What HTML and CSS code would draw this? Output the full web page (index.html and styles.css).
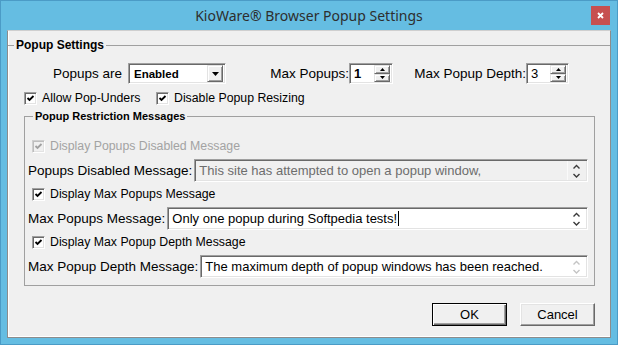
FILE: index.html
```html
<!DOCTYPE html>
<html>
<head>
<meta charset="utf-8">
<link rel="stylesheet" href="styles.css">
</head>
<body>
<div class="window">
  <div class="titlebar">
    <span class="title">KioWare® Browser Popup Settings</span>
    <div class="close"><svg width="7" height="7" viewBox="0 0 7 7"><path d="M1 1L6 6M6 1L1 6" stroke="#fff" stroke-width="1.8"/></svg></div>
  </div>
  <div class="client">
    <fieldset class="group outer">
      <legend>Popup Settings</legend>
      <div class="row1">
        <span class="lbl lbl-popups">Popups are</span>
        <div class="combo">
          <span class="combo-text">Enabled</span>
          <span class="combo-btn"><svg width="7" height="4" viewBox="0 0 7 4"><path d="M0 0H7L3.5 4Z" fill="#000"/></svg></span>
        </div>
        <span class="lbl lbl-maxpop">Max Popups:</span>
        <div class="spin spin-pop">
          <span class="spin-text bold">1</span>
          <span class="spin-btns">
            <span class="spin-btn"><svg width="5" height="3" viewBox="0 0 5 3"><path d="M2.5 0L5 3H0Z" fill="#000"/></svg></span>
            <span class="spin-btn"><svg width="5" height="3" viewBox="0 0 5 3"><path d="M0 0H5L2.5 3Z" fill="#000"/></svg></span>
          </span>
        </div>
        <span class="lbl lbl-depth">Max Popup Depth:</span>
        <div class="spin spin-depth">
          <span class="spin-text">3</span>
          <span class="spin-btns">
            <span class="spin-btn"><svg width="5" height="3" viewBox="0 0 5 3"><path d="M2.5 0L5 3H0Z" fill="#000"/></svg></span>
            <span class="spin-btn"><svg width="5" height="3" viewBox="0 0 5 3"><path d="M0 0H5L2.5 3Z" fill="#000"/></svg></span>
          </span>
        </div>
      </div>
      <div class="row2">
        <label class="check check-under"><span class="box"><svg width="9" height="9" viewBox="0 0 9 9"><path d="M1.5 4L3.5 6L7.5 2" fill="none" stroke="#000" stroke-width="1.8"/></svg></span><span class="ctext">Allow Pop-Unders</span></label>
        <label class="check"><span class="box"><svg width="9" height="9" viewBox="0 0 9 9"><path d="M1.5 4L3.5 6L7.5 2" fill="none" stroke="#000" stroke-width="1.8"/></svg></span><span class="ctext">Disable Popup Resizing</span></label>
      </div>
      <fieldset class="group inner">
        <legend>Popup Restriction Messages</legend>
        <label class="check crow first disabled"><span class="box"><svg width="9" height="9" viewBox="0 0 9 9"><path d="M1.5 4L3.5 6L7.5 2" fill="none" stroke="#a0a0a0" stroke-width="1.8"/></svg></span><span class="ctext">Display Popups Disabled Message</span></label>
        <div class="trow">
          <span class="tlabel">Popups Disabled Message:</span>
          <div class="tbox tbox-disabled">
            <span class="tval">This site has attempted to open a popup window,</span>
            <span class="tscroll"><svg width="9" height="19" viewBox="0 0 9 19"><path d="M1.5 7.5L4.5 4.5L7.5 7.5M1.5 13L4.5 16L7.5 13" fill="none" stroke="#3a3a3a" stroke-width="1.4"/></svg></span>
          </div>
        </div>
        <label class="check crow"><span class="box"><svg width="9" height="9" viewBox="0 0 9 9"><path d="M1.5 4L3.5 6L7.5 2" fill="none" stroke="#000" stroke-width="1.8"/></svg></span><span class="ctext">Display Max Popups Message</span></label>
        <div class="trow">
          <span class="tlabel">Max Popups Message:</span>
          <div class="tbox">
            <span class="tval">Only one popup during Softpedia tests!<span class="caret"></span></span>
            <span class="tscroll"><svg width="9" height="19" viewBox="0 0 9 19"><path d="M1.5 7.5L4.5 4.5L7.5 7.5M1.5 13L4.5 16L7.5 13" fill="none" stroke="#3a3a3a" stroke-width="1.4"/></svg></span>
          </div>
        </div>
        <label class="check crow"><span class="box"><svg width="9" height="9" viewBox="0 0 9 9"><path d="M1.5 4L3.5 6L7.5 2" fill="none" stroke="#000" stroke-width="1.8"/></svg></span><span class="ctext">Display Max Popup Depth Message</span></label>
        <div class="trow">
          <span class="tlabel">Max Popup Depth Message:</span>
          <div class="tbox">
            <span class="tval">The maximum depth of popup windows has been reached.</span>
            <span class="tscroll"><svg width="9" height="19" viewBox="0 0 9 19"><path d="M1.5 7.5L4.5 4.5L7.5 7.5M1.5 13L4.5 16L7.5 13" fill="none" stroke="#c4c4c4" stroke-width="1.4"/></svg></span>
          </div>
        </div>
      </fieldset>
    </fieldset>
    <div class="buttons">
      <button class="btn btn-default">OK</button>
      <button class="btn">Cancel</button>
    </div>
  </div>
</div>
</body>
</html>
```

FILE: styles.css
```css
html, body {
  margin: 0;
  padding: 0;
}
body {
  width: 618px;
  height: 345px;
  overflow: hidden;
  font-family: "Liberation Sans", Arial, sans-serif;
  color: #000;
}
.window {
  box-sizing: border-box;
  width: 618px;
  height: 345px;
  background: #65bde2;
  border: 1px solid #4b9bc6;
  display: flex;
  flex-direction: column;
}
.titlebar {
  height: 29px;
  flex: none;
  display: grid;
  grid-template-columns: 1fr auto 1fr;
  align-items: start;
}
.title {
  grid-column: 2;
  font-family: "Noto Sans", "Open Sans", sans-serif;
  font-size: 14px;
  line-height: 29px;
  color: #2e2e2e;
  white-space: nowrap;
}
.close {
  grid-column: 3;
  justify-self: end;
  margin: 5px 7px 0 0;
  width: 19px;
  height: 19px;
  background: #c75050;
  display: flex;
  align-items: center;
  justify-content: center;
}
.close svg { display: block; }
.client {
  box-sizing: border-box;
  margin: 0 6px 6px;
  flex: 1;
  background: #f0f0f0;
  border: 1px solid #8c8c8c;
  border-top-color: #cfcfcf;
  box-shadow: inset 1px 0 0 #fff, inset 0 -1px 0 #fff;
}
.group {
  margin: 0;
  padding: 0;
  min-width: 0;
  border: 1px solid #a0a0a0;
}
.outer {
  border-width: 1px 0 0 0;
  margin-top: 7px;
}
.outer > legend {
  margin-left: 6px;
  padding: 0 2px;
  font-weight: bold;
  font-size: 12px;
  line-height: 15px;
}
.row1 {
  display: flex;
  align-items: center;
  height: 21px;
  margin-top: 10px;
  padding-left: 45px;
}
.lbl {
  font-size: 13.5px;
  white-space: nowrap;
}
.lbl-popups { width: 75px; }
.lbl-maxpop { margin-left: 42px; width: 81px; text-align: right; }
.lbl-depth { margin-left: 19px; width: 114px; text-align: right; }
.combo, .spin, .tbox {
  box-sizing: border-box;
  border-top: 1px solid #a0a0a0;
  border-left: 1px solid #a0a0a0;
  border-bottom: 1px solid #fff;
  border-right: 1px solid #fff;
  box-shadow: inset 1px 1px 0 #696969, inset -1px -1px 0 #e3e3e3;
  background: #fff;
  display: flex;
  align-items: center;
}
.combo {
  width: 98px;
  height: 21px;
  padding: 2px;
}
.combo-text {
  flex: 1;
  font-weight: bold;
  font-size: 11.5px;
  padding-left: 3px;
}
.combo-btn, .spin-btn {
  box-sizing: border-box;
  display: flex;
  align-items: center;
  justify-content: center;
  background: #f0f0f0;
  border-top: 1px solid #e3e3e3;
  border-left: 1px solid #e3e3e3;
  border-right: 1px solid #696969;
  border-bottom: 1px solid #696969;
  box-shadow: inset 1px 1px 0 #fff, inset -1px -1px 0 #a0a0a0;
}
.combo-btn {
  width: 16px;
  height: 17px;
}
.combo-btn svg, .spin-btn svg, .tscroll svg, .box svg { display: block; }
.spin {
  height: 21px;
  padding: 2px;
}
.spin-pop { width: 44px; }
.spin-depth { width: 43px; }
.spin-text {
  flex: 1;
  font-size: 13px;
  padding-left: 2px;
}
.bold { font-weight: bold; }
.spin-btns {
  display: flex;
  flex-direction: column;
  width: 16px;
  height: 17px;
}
.spin-btn {
  flex: 1;
}
.row2 {
  display: flex;
  align-items: center;
  height: 16px;
  margin-top: 6px;
  padding-left: 16px;
}
.check {
  display: flex;
  align-items: center;
  gap: 5px;
  height: 16px;
}
.check-under { width: 132px; }
.box {
  box-sizing: border-box;
  width: 13px;
  height: 13px;
  flex: none;
  background: #fff;
  border-top: 1px solid #a0a0a0;
  border-left: 1px solid #a0a0a0;
  border-bottom: 1px solid #fff;
  border-right: 1px solid #fff;
  box-shadow: inset 1px 1px 0 #696969, inset -1px -1px 0 #e3e3e3;
  display: flex;
  align-items: center;
  justify-content: center;
  padding: 1px 0 0 0;
}
.ctext {
  font-size: 12.3px;
  white-space: nowrap;
}
.disabled .box {
  background: #f0f0f0;
  box-shadow: inset 1px 1px 0 #bdbdbd, inset -1px -1px 0 #e3e3e3;
  border-top-color: #cfcfcf;
  border-left-color: #cfcfcf;
}
.disabled .ctext { color: #a3a3a3; }
.inner {
  margin: 4px 15px 0 16px;
  padding: 0 0 7px 0;
}
.inner > legend {
  margin-left: 8px;
  padding: 0 2px;
  font-weight: bold;
  font-size: 11px;
  line-height: 13px;
}
.crow {
  padding-left: 7px;
  margin-top: 4px;
}
.crow.first { margin-top: 15px; }
.trow {
  display: flex;
  align-items: center;
  height: 23px;
  margin-top: 5px;
  padding-left: 3px;
  padding-right: 6px;
}
.tlabel {
  font-size: 13.5px;
  white-space: nowrap;
}
.tbox {
  flex: 1;
  height: 23px;
  margin-left: 2px;
  padding: 2px 2px 2px 4px;
  min-width: 0;
}
.tval {
  flex: 1;
  font-size: 13px;
  line-height: 19px;
  white-space: nowrap;
  overflow: hidden;
}
.tscroll {
  width: 17px;
  height: 19px;
  display: flex;
  justify-content: center;
}
.tbox-disabled { background: #f0f0f0; }
.tbox-disabled .tval { color: #6d6d6d; }
.tbox-disabled .tscroll { border-left: 1px solid #fafafa; }
.caret {
  display: inline-block;
  width: 0;
  height: 15px;
  border-left: 1px solid #000;
  vertical-align: -3px;
  margin-left: 1px;
}
.buttons {
  display: flex;
  justify-content: flex-end;
  gap: 13px;
  margin: 17px 15px 0 0;
}
.btn {
  box-sizing: border-box;
  width: 75px;
  height: 23px;
  margin: 0;
  padding: 0;
  font-family: "Liberation Sans", Arial, sans-serif;
  font-size: 13px;
  color: #000;
  background: #f0f0f0;
  border-top: 1px solid #fff;
  border-left: 1px solid #fff;
  border-right: 1px solid #696969;
  border-bottom: 1px solid #696969;
  box-shadow: inset -1px -1px 0 #a0a0a0, inset 1px 1px 0 #e3e3e3;
}
.btn-default {
  border: 1px solid #000;
  box-shadow: inset 1px 1px 0 #fff, inset -1px -1px 0 #696969, inset -2px -2px 0 #a0a0a0;
}
```
